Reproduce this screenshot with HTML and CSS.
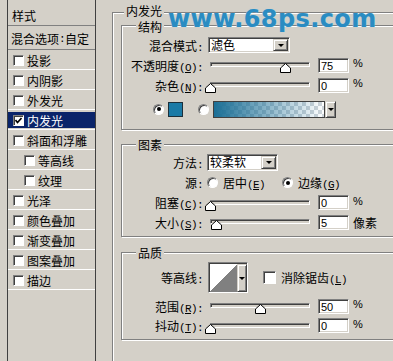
FILE: index.html
```html
<!DOCTYPE html>
<html>
<head>
	<meta charset="utf-8">
	<title>图层样式 - 内发光</title>
	<link rel="stylesheet" href="styles.css">
</head>
<body>
	<div class="dialog">
		<div class="styles">
			<div class="styles-head">样式</div>
			<div class="styles-blend">混合选项<span class="colon">:</span>自定</div>
			<div class="item"><div class="item-line"><span class="check"></span>投影</div></div>
			<div class="item"><div class="item-line"><span class="check"></span>内阴影</div></div>
			<div class="item"><div class="item-line"><span class="check"></span>外发光</div></div>
			<div class="item selected"><div class="item-line"><span class="check"><svg width="7" height="7" viewBox="0 0 7 7"><polyline points="0.5,3 2.5,5.5 6.5,1" fill="none" stroke="#000" stroke-width="1.6"/></svg></span>内发光</div></div>
			<div class="item"><div class="item-line"><span class="check"></span>斜面和浮雕</div></div>
			<div class="item sub"><div class="item-line"><span class="check"></span>等高线</div></div>
			<div class="item sub"><div class="item-line"><span class="check"></span>纹理</div></div>
			<div class="item"><div class="item-line"><span class="check"></span>光泽</div></div>
			<div class="item"><div class="item-line"><span class="check"></span>颜色叠加</div></div>
			<div class="item"><div class="item-line"><span class="check"></span>渐变叠加</div></div>
			<div class="item"><div class="item-line"><span class="check"></span>图案叠加</div></div>
			<div class="item"><div class="item-line"><span class="check"></span>描边</div></div>
		</div>

		<div class="panel">
			<div class="group outer">
				<div class="legend">内发光</div>

				<!-- 结构 -->
				<div class="group g-structure">
					<div class="legend">结构</div>
					<div class="row first">
						<div class="lbl">混合模式<span class="colon">:</span></div>
						<div class="select mode"><span>滤色</span><span class="drop"></span></div>
					</div>
					<div class="row">
						<div class="lbl">不透明度<span class="ak">(<u>O</u>)</span><span class="colon">:</span></div>
						<div class="slider"><div class="track"></div><div class="thumb" style="left: 75%"><svg width="11" height="10" viewBox="0 0 11 10"><path d="M5.5 0.5 L10.5 5 V9.5 H0.5 V5 Z" fill="#fff" stroke="#000"/></svg></div></div>
						<div class="num">75</div>
						<div class="pct">%</div>
					</div>
					<div class="row">
						<div class="lbl">杂色<span class="ak">(<u>N</u>)</span><span class="colon">:</span></div>
						<div class="slider"><div class="track"></div><div class="thumb" style="left: 0%"><svg width="11" height="10" viewBox="0 0 11 10"><path d="M5.5 0.5 L10.5 5 V9.5 H0.5 V5 Z" fill="#fff" stroke="#000"/></svg></div></div>
						<div class="num">0</div>
						<div class="pct">%</div>
					</div>
					<div class="row color-row">
						<span class="radio on"></span>
						<span class="swatch"></span>
						<span class="radio radio-grad"></span>
						<span class="gradient"></span>
						<span class="drop grad-drop"></span>
					</div>
				</div>

				<!-- 图素 -->
				<div class="group g-elements">
					<div class="legend">图素</div>
					<div class="row h19 mt1">
						<div class="lbl">方法<span class="colon">:</span></div>
						<div class="select method"><span>较柔软</span><span class="drop"></span></div>
					</div>
					<div class="row h21">
						<div class="lbl">源<span class="colon">:</span></div>
						<span class="radio src"></span>
						<span class="opt">居中<span class="ak">(<u>E</u>)</span></span>
						<span class="radio src-edge on"></span>
						<span class="opt">边缘<span class="ak">(<u>G</u>)</span></span>
					</div>
					<div class="row h19">
						<div class="lbl">阻塞<span class="ak">(<u>C</u>)</span><span class="colon">:</span></div>
						<div class="slider"><div class="track"></div><div class="thumb" style="left: 0%"><svg width="11" height="10" viewBox="0 0 11 10"><path d="M5.5 0.5 L10.5 5 V9.5 H0.5 V5 Z" fill="#fff" stroke="#000"/></svg></div></div>
						<div class="num">0</div>
						<div class="pct">%</div>
					</div>
					<div class="row">
						<div class="lbl">大小<span class="ak">(<u>S</u>)</span><span class="colon">:</span></div>
						<div class="slider"><div class="track"></div><div class="thumb" style="left: 6%"><svg width="11" height="10" viewBox="0 0 11 10"><path d="M5.5 0.5 L10.5 5 V9.5 H0.5 V5 Z" fill="#fff" stroke="#000"/></svg></div></div>
						<div class="num">5</div>
						<div class="unit">像素</div>
					</div>
				</div>

				<!-- 品质 -->
				<div class="group g-quality">
					<div class="legend">品质</div>
					<div class="row h33 mt1">
						<div class="lbl">等高线<span class="colon">:</span></div>
						<div class="contour"><span class="curve"></span><span class="drop"></span></div>
						<span class="check aa"></span>
						<span class="opt">消除锯齿<span class="ak">(<u>L</u>)</span></span>
					</div>
					<div class="row mt2">
						<div class="lbl">范围<span class="ak">(<u>R</u>)</span><span class="colon">:</span></div>
						<div class="slider"><div class="track"></div><div class="thumb" style="left: 50%"><svg width="11" height="10" viewBox="0 0 11 10"><path d="M5.5 0.5 L10.5 5 V9.5 H0.5 V5 Z" fill="#fff" stroke="#000"/></svg></div></div>
						<div class="num">50</div>
						<div class="pct">%</div>
					</div>
					<div class="row h19">
						<div class="lbl">抖动<span class="ak">(<u>T</u>)</span><span class="colon">:</span></div>
						<div class="slider"><div class="track"></div><div class="thumb" style="left: 0%"><svg width="11" height="10" viewBox="0 0 11 10"><path d="M5.5 0.5 L10.5 5 V9.5 H0.5 V5 Z" fill="#fff" stroke="#000"/></svg></div></div>
						<div class="num">0</div>
						<div class="pct">%</div>
					</div>
				</div>
			</div>
		</div>
	</div>

	<div class="watermark">www.68ps.com</div>
</body>
</html>
```

FILE: styles.css
```css
html, body {
	margin: 0;
	overflow: hidden;
}
body {
	position: relative;
	width: 393px;
	height: 361px;
	background-color: #d4d0c8;
	font-family: "Noto Sans CJK SC", sans-serif;
	font-size: 12px;
	color: #000;
}
.dialog {
	display: flex;
	height: 361px;
	padding-left: 7px;
	overflow: hidden;
}

/* style list on the left */
.styles {
	flex: none;
	width: 89px;
	box-sizing: border-box;
	border-left: 1px solid #404040;
	border-right: 1px solid #404040;
}
.styles-head {
	box-sizing: border-box;
	height: 26px;
	padding: 5px 0 0 4px;
	display: flex;
	align-items: center;
	border-bottom: 1px solid #808080;
}
.styles-blend {
	box-sizing: border-box;
	height: 24px;
	padding: 2px 0 0 3px;
	display: flex;
	align-items: center;
	border-bottom: 1px solid #808080;
}
.item {
	box-sizing: border-box;
	height: 20px;
	padding-top: 2px;
	border-bottom: 1px solid #fff;
}
.item-line {
	height: 16px;
	display: flex;
	align-items: center;
	padding-left: 5px;
}
.sub .item-line {
	padding-left: 16px;
}
.selected .item-line {
	background-color: #0a246a;
	color: #fff;
}
.check {
	flex: none;
	width: 11px;
	height: 11px;
	box-sizing: border-box;
	margin-right: 3px;
	display: flex;
	align-items: center;
	justify-content: center;
	background: #fff;
	border: 1px solid;
	border-color: #808080 #fff #fff #808080;
	box-shadow: inset 1px 1px 0 #404040;
}
.check svg {
	display: block;
}

/* group boxes */
.panel {
	flex: none;
	box-sizing: border-box;
	width: 300px;
	height: 361px;
	margin-left: 16px;
	padding-top: 12px;
	overflow: hidden;
}
.group {
	border: 1px solid #808080;
	box-shadow: inset 1px 1px 0 #fff, 1px 1px 0 #fff;
}
.outer {
	height: 400px;
	padding-left: 8px;
}
.legend {
	width: fit-content;
	height: 14px;
	line-height: 14px;
	margin: -7px 0 0 14px;
	padding: 0 2px;
	background-color: #d4d0c8;
}
.outer > .legend {
	margin: -9px 0 0 3px;
}
.g-structure {
	margin-top: 7px;
	padding-bottom: 10px;
}
.g-structure > .legend {
	margin-top: -6px;
}
.g-elements {
	margin-top: 14px;
	padding-bottom: 4px;
}
.g-quality {
	margin-top: 15px;
	padding-bottom: 4px;
}

/* rows */
.row {
	display: flex;
	align-items: center;
	height: 20px;
}
.row.first {
	margin-top: 1px;
}
.row.mt1 {
	margin-top: 1px;
}
.row.mt2 {
	margin-top: 2px;
}
.row.h19 {
	height: 19px;
}
.row.h21 {
	height: 21px;
}
.row.h33 {
	height: 33px;
}
.lbl {
	flex: none;
	width: 81px;
	text-align: right;
	white-space: nowrap;
}
.ak, .colon {
	font-family: "Liberation Mono", monospace;
	font-size: 11px;
	letter-spacing: -0.6px;
}

/* sunken fields */
.select, .num, .contour {
	box-sizing: border-box;
	background: #fff;
	border: 1px solid;
	border-color: #808080 #fff #fff #808080;
	box-shadow: inset 1px 1px 0 #404040, inset -1px -1px 0 #d4d0c8;
}
.select {
	flex: none;
	display: flex;
	align-items: center;
	padding: 0 1px 1px 2px;
	line-height: 14px;
}
.mode {
	width: 82px;
	height: 16px;
	margin-left: 5px;
}
.method {
	width: 71px;
	height: 17px;
	margin-left: 4px;
}
.drop {
	flex: none;
	box-sizing: border-box;
	display: flex;
	align-items: center;
	justify-content: center;
	background-color: #d4d0c8;
	border: 1px solid;
	border-color: #d4d0c8 #404040 #404040 #d4d0c8;
	box-shadow: inset 1px 1px 0 #fff, inset -1px -1px 0 #808080;
}
.drop::after {
	content: "";
	border-left: 3px solid transparent;
	border-right: 3px solid transparent;
	border-top: 3px solid #000;
}
.select .drop {
	margin: 1px 0 0 auto;
	align-self: stretch;
	width: 15px;
}
.num {
	flex: none;
	width: 31px;
	height: 15px;
	margin-left: 8px;
	padding: 1px 0 0 2px;
	font-family: "Liberation Sans", sans-serif;
	font-size: 11px;
	line-height: 12px;
}
.pct {
	align-self: flex-start;
	margin: 3px 0 0 4px;
	font-family: "Liberation Sans", sans-serif;
	font-size: 11px;
	line-height: 11px;
}
.unit {
	margin-left: 4px;
}

/* sliders */
.slider {
	flex: none;
	position: relative;
	width: 100px;
	height: 14px;
	margin-left: 7px;
}
.track {
	box-sizing: border-box;
	height: 5px;
	margin-top: 4px;
	background-color: #d4d0c8;
	border: 1px solid;
	border-color: #808080 #fff #fff #808080;
	box-shadow: inset 1px 1px 0 #404040;
}
.thumb {
	position: absolute;
	top: 5px;
	width: 11px;
	height: 10px;
	margin-left: -5px;
}
.thumb svg {
	display: block;
}

/* radios and colour */
.radio {
	flex: none;
	box-sizing: border-box;
	width: 11px;
	height: 11px;
	display: flex;
	align-items: center;
	justify-content: center;
	border-radius: 50%;
	background: #fff;
	border: 1px solid;
	border-color: #808080 #fff #fff #808080;
	box-shadow: inset 1px 1px 0 #404040;
}
.radio.on::after {
	content: "";
	width: 4px;
	height: 4px;
	border-radius: 50%;
	background-color: #000;
}
.color-row {
	margin-top: 4px;
	padding-left: 31px;
}
.swatch {
	flex: none;
	box-sizing: border-box;
	width: 15px;
	height: 15px;
	margin-left: 4px;
	border: 1px solid #1c2f3a;
	background-color: #1a7aa6;
}
.radio-grad {
	margin-left: 15px;
}
.gradient {
	flex: none;
	box-sizing: border-box;
	width: 112px;
	height: 17px;
	margin-left: 4px;
	border: 1px solid #404040;
	background: linear-gradient(to right, #1b6f96, rgba(27, 111, 150, 0)), repeating-conic-gradient(#fff 0% 25%, #cfd5da 0% 50%) 0 0 / 8px 8px;
}
.grad-drop {
	width: 11px;
	height: 17px;
}
.src {
	margin-left: 4px;
}
.src-edge {
	margin-left: 17px;
}
.opt {
	margin-left: 5px;
	white-space: nowrap;
}

/* contour */
.contour {
	flex: none;
	display: flex;
	width: 40px;
	height: 31px;
	margin-left: 5px;
	padding: 1px 0 0 1px;
}
.curve {
	flex: 1;
	background: linear-gradient(to top left, #808080 50%, #fff 50%);
}
.contour .drop {
	width: 10px;
}
.check.aa {
	width: 13px;
	height: 13px;
	margin: 0 0 0 15px;
}

.watermark {
	position: absolute;
	left: 168px;
	top: 7px;
	font-family: "DejaVu Sans", sans-serif;
	font-weight: bold;
	font-size: 24px;
	line-height: 24px;
	letter-spacing: 0.4px;
	color: #2a8cc2;
	text-shadow: 0 0 1px #a8d4ea;
}
```
